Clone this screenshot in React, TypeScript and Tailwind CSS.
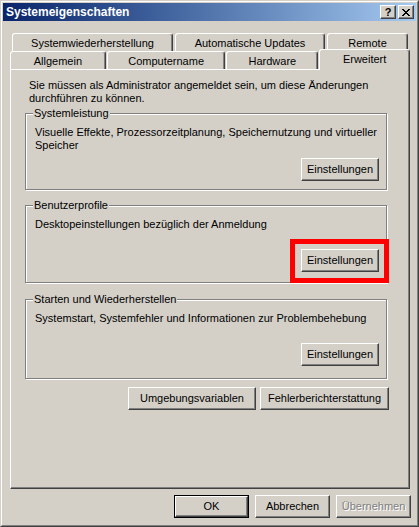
import React from 'react';

const face = 'bg-[#D4D0C8]';

function Btn({
  children,
  className = '',
  isDefault = false,
  disabled = false,
}: {
  children: React.ReactNode;
  className?: string;
  isDefault?: boolean;
  disabled?: boolean;
}) {
  const inner = (
    <div
      className={`h-full w-full ${face} border border-t-white border-l-white border-r-[#404040] border-b-[#404040] shadow-[inset_-1px_-1px_0_#808080] flex items-center justify-center ${
        disabled ? 'text-[#808080] [text-shadow:1px_1px_0_#fff]' : ''
      }`}
    >
      {children}
    </div>
  );
  if (isDefault) {
    return <div className={`h-[23px] border border-black ${className}`}>{inner}</div>;
  }
  return <div className={`h-[23px] ${className}`}>{inner}</div>;
}

function Tab({ label, className = '' }: { label: string; className?: string }) {
  return (
    <div
      className={`h-[18px] ${face} border-t border-l border-white border-r border-r-[#404040] rounded-t-[3px] shadow-[inset_-1px_0_0_#808080] flex items-center justify-center pt-px ${className}`}
    >
      {label}
    </div>
  );
}

function Group({
  title,
  children,
  className = '',
}: {
  title: string;
  children: React.ReactNode;
  className?: string;
}) {
  return (
    <fieldset
      className={`w-[362px] border border-[#808080] shadow-[inset_1px_1px_0_#fff,1px_1px_0_#fff] pl-[9px] pr-[7px] pt-[6px] ${className}`}
    >
      <legend className={`ml-[-2px] px-px ${face} leading-[13px]`}>{title}</legend>
      {children}
    </fieldset>
  );
}

export default function App() {
  return (
    <div className="w-[419px] h-[527px] bg-[#D4D0C8] border border-t-[#D4D0C8] border-l-[#D4D0C8] border-r-[#404040] border-b-[#404040] font-['Liberation_Sans',Arial,sans-serif] text-[11px] leading-[13px] text-black select-none">
      <div className="h-full border border-t-white border-l-white border-r-[#808080] border-b-[#808080] p-px flex flex-col">
        {/* Titelleiste */}
        <div className="h-[18px] bg-gradient-to-r from-[#0A246A] to-[#A6CAF0] flex items-center pl-[3px] pr-[2px]">
          <span className="text-white font-bold text-[12px]">Systemeigenschaften</span>
          <div className="ml-auto flex gap-[2px]">
            <div className="w-[16px] h-[14px] bg-[#D4D0C8] border border-t-white border-l-white border-r-[#404040] border-b-[#404040] shadow-[inset_-1px_-1px_0_#808080] flex items-center justify-center">
              <span className="font-bold text-[11px] leading-none mt-px">?</span>
            </div>
            <div className="w-[16px] h-[14px] bg-[#D4D0C8] border border-t-white border-l-white border-r-[#404040] border-b-[#404040] shadow-[inset_-1px_-1px_0_#808080] flex items-center justify-center">
              <svg width="8" height="7" viewBox="0 0 8 7" shapeRendering="crispEdges">
                <path d="M0 0h2v1h-2zM6 0h2v1h-2zM1 1h2v1h-2zM5 1h2v1h-2zM2 2h4v1h-4zM3 3h2v1h-2zM2 4h4v1h-4zM1 5h2v1h-2zM5 5h2v1h-2zM0 6h2v1h-2zM6 6h2v1h-2z" fill="#000" />
              </svg>
            </div>
          </div>
        </div>

        {/* Inhalt */}
        <div className="flex-1 flex flex-col pl-[7px] pr-[6px] pt-[12px]">
          {/* Registerkarten */}
          <div className="flex gap-[2px] pl-[2px]">
            <Tab label="Systemwiederherstellung" className="w-[161px]" />
            <Tab label="Automatische Updates" className="w-[150px]" />
            <Tab label="Remote" className="w-[81px]" />
          </div>
          <div className="flex gap-[1px] items-start">
            <Tab label="Allgemein" className="w-[96px]" />
            <Tab label="Computername" className="w-[119px]" />
            <Tab label="Hardware" className="w-[92px]" />
            <div className="relative z-10 w-[91px] h-[21px] -mt-[2px] -mb-[1px] bg-[#D4D0C8] border-t border-l border-white border-r border-r-[#404040] rounded-t-[3px] shadow-[inset_-1px_0_0_#808080] flex justify-center pt-[3px]">
              Erweitert
            </div>
          </div>

          {/* Registerseite */}
          <div className="h-[420px] border border-t-white border-l-white border-r-[#404040] border-b-[#404040] shadow-[inset_-1px_-1px_0_#808080] pl-[14px] pr-[20px] pt-[9px] flex flex-col">
            <p className="pl-[4px]">
              Sie müssen als Administrator angemeldet sein, um diese Änderungen
              <br />
              durchführen zu können.
            </p>

            <Group title="Systemleistung" className="mt-[2px] pb-[8px]">
              <p>
                Visuelle Effekte, Prozessorzeitplanung, Speichernutzung und virtueller
                <br />
                Speicher
              </p>
              <div className="flex justify-end mt-[6px]">
                <Btn className="w-[78px]">Einstellungen</Btn>
              </div>
            </Group>

            <Group title="Benutzerprofile" className="mt-[9px] pb-[10px]">
              <p>Desktopeinstellungen bezüglich der Anmeldung</p>
              <div className="flex justify-end mt-[18px]">
                <div className="relative">
                  <Btn className="w-[78px]">Einstellungen</Btn>
                  <div className="absolute -left-[11px] -right-[10px] -top-[10px] -bottom-[11px] border-[5px] border-[#FF0000] pointer-events-none" />
                </div>
              </div>
            </Group>

            <Group title="Starten und Wiederherstellen" className="mt-[10px] pb-[12px]">
              <p>Systemstart, Systemfehler und Informationen zur Problembehebung</p>
              <div className="flex justify-end mt-[18px]">
                <Btn className="w-[78px]">Einstellungen</Btn>
              </div>
            </Group>

            <div className="flex justify-end gap-[4px] mt-[8px]">
              <Btn className="w-[128px]">Umgebungsvariablen</Btn>
              <Btn className="w-[129px]">Fehlerberichterstattung</Btn>
            </div>
          </div>

          {/* Dialogschaltflächen */}
          <div className="flex justify-end gap-[6px] mt-[6px] -mr-px">
            <Btn isDefault className="w-[75px]">OK</Btn>
            <Btn className="w-[75px]">Abbrechen</Btn>
            <Btn disabled className="w-[75px]">Übernehmen</Btn>
          </div>
        </div>
      </div>
    </div>
  );
}
